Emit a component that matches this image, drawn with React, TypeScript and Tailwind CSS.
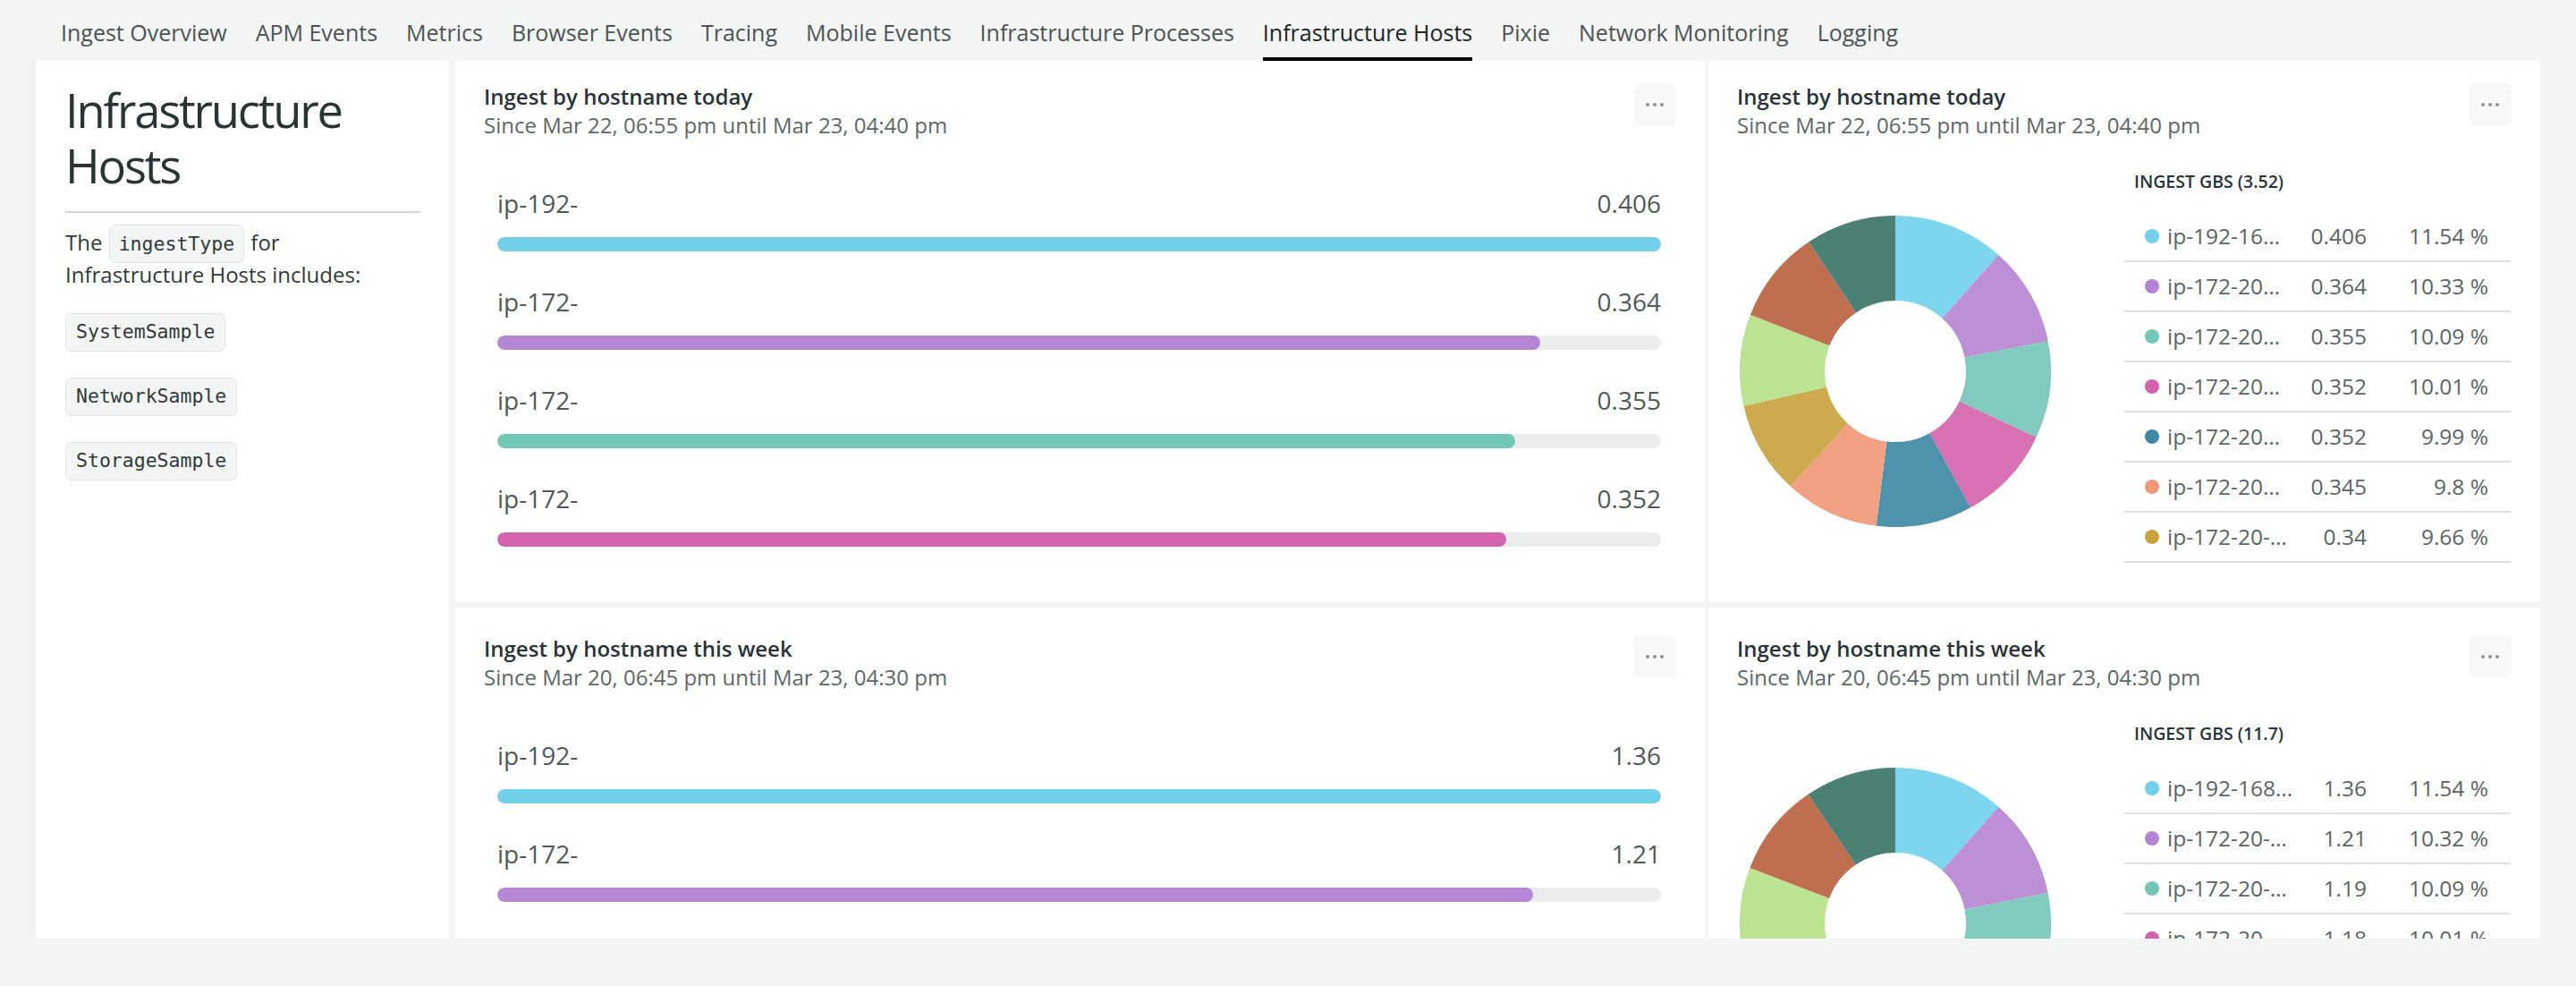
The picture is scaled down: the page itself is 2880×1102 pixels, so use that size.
import React from 'react';

const tabs = [
  'Ingest Overview',
  'APM Events',
  'Metrics',
  'Browser Events',
  'Tracing',
  'Mobile Events',
  'Infrastructure Processes',
  'Infrastructure Hosts',
  'Pixie',
  'Network Monitoring',
  'Logging',
];

type BarRow = { label: string; value: number; color: string };
type LegendRow = { name: string; value: string; pct: string; dot: string };

const sliceColors = ['#7dd6ee', '#bd90d6', '#80cbbd', '#d771b4', '#4f92ab', '#f2a084', '#cda94f', '#bce391', '#bf6f50', '#4b8175'];
const dotColors = ['#71cfea', '#b583d3', '#72c6b5', '#d461ad', '#3d88a4', '#f29679', '#c9a13e'];

const todayBars: BarRow[] = [
  { label: 'ip-192-', value: 0.406, color: '#71cfea' },
  { label: 'ip-172-', value: 0.364, color: '#b685d4' },
  { label: 'ip-172-', value: 0.355, color: '#73c7b7' },
  { label: 'ip-172-', value: 0.352, color: '#d462ae' },
];

const weekBars: BarRow[] = [
  { label: 'ip-192-', value: 1.36, color: '#71cfea' },
  { label: 'ip-172-', value: 1.21, color: '#b685d4' },
  { label: 'ip-172-', value: 1.19, color: '#73c7b7' },
  { label: 'ip-172-', value: 1.18, color: '#d462ae' },
];

const todayLegend: LegendRow[] = [
  { name: 'ip-192-16…', value: '0.406', pct: '11.54 %', dot: dotColors[0] },
  { name: 'ip-172-20…', value: '0.364', pct: '10.33 %', dot: dotColors[1] },
  { name: 'ip-172-20…', value: '0.355', pct: '10.09 %', dot: dotColors[2] },
  { name: 'ip-172-20…', value: '0.352', pct: '10.01 %', dot: dotColors[3] },
  { name: 'ip-172-20…', value: '0.352', pct: '9.99 %', dot: dotColors[4] },
  { name: 'ip-172-20…', value: '0.345', pct: '9.8 %', dot: dotColors[5] },
  { name: 'ip-172-20-…', value: '0.34', pct: '9.66 %', dot: dotColors[6] },
];

const weekLegend: LegendRow[] = [
  { name: 'ip-192-168…', value: '1.36', pct: '11.54 %', dot: dotColors[0] },
  { name: 'ip-172-20-…', value: '1.21', pct: '10.32 %', dot: dotColors[1] },
  { name: 'ip-172-20-…', value: '1.19', pct: '10.09 %', dot: dotColors[2] },
  { name: 'ip-172-20-…', value: '1.18', pct: '10.01 %', dot: dotColors[3] },
  { name: 'ip-172-20-…', value: '1.17', pct: '9.93 %', dot: dotColors[4] },
  { name: 'ip-172-20-…', value: '1.15', pct: '9.76 %', dot: dotColors[5] },
  { name: 'ip-172-20-…', value: '1.13', pct: '9.59 %', dot: dotColors[6] },
];

const todaySlices = [0.406, 0.364, 0.355, 0.352, 0.352, 0.345, 0.34, 0.334, 0.341, 0.331];
const weekSlices = [11.54, 10.32, 10.09, 10.01, 9.93, 9.76, 9.59, 9.55, 9.75, 9.46];

const Donut: React.FC<{ values: number[] }> = ({ values }) => {
  const total = values.reduce((s, v) => s + v, 0);
  const R = 174;
  const r = 79;
  const c = 174;
  const pt = (rad: number, a: number) => [c + rad * Math.sin(a), c - rad * Math.cos(a)];
  let acc = 0;
  return (
    <svg width="348" height="348" viewBox="0 0 348 348" className="shrink-0">
      {values.map((v, i) => {
        const a0 = (acc / total) * Math.PI * 2;
        acc += v;
        const a1 = (acc / total) * Math.PI * 2;
        const large = a1 - a0 > Math.PI ? 1 : 0;
        const [x0, y0] = pt(R, a0);
        const [x1, y1] = pt(R, a1);
        const [x2, y2] = pt(r, a1);
        const [x3, y3] = pt(r, a0);
        const d = `M${x0} ${y0}A${R} ${R} 0 ${large} 1 ${x1} ${y1}L${x2} ${y2}A${r} ${r} 0 ${large} 0 ${x3} ${y3}Z`;
        return <path key={i} d={d} fill={sliceColors[i % sliceColors.length]} />;
      })}
    </svg>
  );
};

const MenuButton = () => (
  <button className="mt-[1px] w-[48px] h-[48px] rounded-[8px] bg-[#f7f8f8] flex items-center justify-center gap-[4px] shrink-0">
    <span className="w-[4px] h-[4px] rounded-full bg-[#8f9696]" />
    <span className="w-[4px] h-[4px] rounded-full bg-[#8f9696]" />
    <span className="w-[4px] h-[4px] rounded-full bg-[#8f9696]" />
  </button>
);

const CardHeader: React.FC<{ title: string; since: string }> = ({ title, since }) => (
  <div className="flex items-start justify-between">
    <div>
      <h3 className="text-[24px] leading-[32px] font-semibold text-[#293338]">{title}</h3>
      <p className="text-[24px] leading-[32px] text-[#5d6767]">{since}</p>
    </div>
    <MenuButton />
  </div>
);

const BarCard: React.FC<{ title: string; since: string; rows: BarRow[] }> = ({ title, since, rows }) => {
  const max = Math.max(...rows.map((r) => r.value));
  return (
    <div className="bg-white rounded-[4px] pt-[30px] px-[32px] overflow-hidden">
      <CardHeader title={title} since={since} />
      <div className="mt-[52px] pl-[15px] pr-[17px] flex flex-col gap-[37px]">
        {rows.map((row, i) => (
          <div key={i}>
            <div className="flex justify-between text-[28px] leading-[38px] text-[#505959]">
              <span>{row.label}</span>
              <span>{row.value}</span>
            </div>
            <div className="mt-[19px] h-[16px] rounded-full bg-[#ebeded] overflow-hidden">
              <div className="h-full rounded-full" style={{ width: `${(row.value / max) * 100}%`, backgroundColor: row.color }} />
            </div>
          </div>
        ))}
      </div>
    </div>
  );
};

const PieCard: React.FC<{ title: string; since: string; total: string; slices: number[]; legend: LegendRow[] }> = ({
  title,
  since,
  total,
  slices,
  legend,
}) => (
  <div className="bg-white rounded-[4px] pt-[30px] px-[32px] overflow-hidden">
    <CardHeader title={title} since={since} />
    <div className="mt-[33px] flex items-start justify-between">
      <div className="mt-[52px] ml-[3px]">
        <Donut values={slices} />
      </div>
      <div className="w-[432px] mr-[1px]">
        <div className="pl-[11px] h-[28px] text-[19.5px] leading-[28px] font-semibold uppercase text-[#293338]">
          Ingest GBs ({total})
        </div>
        <div className="mt-[20px]">
          {legend.map((row, i) => (
            <div key={i} className="h-[56px] flex items-center border-b-2 border-[#dfe1e1] text-[24.5px] text-[#5b6464] whitespace-nowrap">
              <span className="ml-[23px] w-[16px] h-[16px] rounded-full shrink-0" style={{ backgroundColor: row.dot }} />
              <span className="ml-[9px] w-[138px]">{row.name}</span>
              <span className="w-[85px] text-right">{row.value}</span>
              <span className="w-[136px] text-right">{row.pct}</span>
            </div>
          ))}
        </div>
      </div>
    </div>
  </div>
);

const Code: React.FC<{ children: React.ReactNode }> = ({ children }) => (
  <code className="font-['DejaVu_Sans_Mono',monospace] text-[21.5px] px-[10px] py-[8px] mx-[1px] rounded-[7px] bg-[#f3f4f4] border border-[#e1e4e4]">
    {children}
  </code>
);

const Pill: React.FC<{ children: React.ReactNode }> = ({ children }) => (
  <div className="h-[43px] px-[11px] flex items-center rounded-[7px] bg-[#f3f4f4] border border-[#e1e4e4] font-['DejaVu_Sans_Mono',monospace] text-[21.5px] text-[#2f3a3a]">
    {children}
  </div>
);

export default function App() {
  return (
    <div className="w-[2880px] h-[1102px] bg-[#f3f4f4] overflow-hidden font-['Open_Sans','Liberation_Sans',sans-serif]">
      <nav className="h-[68px] pl-[68px] flex items-end gap-[32px]">
        {tabs.map((t) => {
          const active = t === 'Infrastructure Hosts';
          return (
            <div
              key={t}
              className={`pb-[11px] border-b-4 text-[25px] leading-[34px] whitespace-nowrap ${
                active ? 'border-black text-[#1d2525]' : 'border-transparent text-[#4b5454]'
              }`}
            >
              {t}
            </div>
          );
        })}
      </nav>

      <div className="pl-[32px] w-[2848px] h-[981px] overflow-hidden">
        <div className="h-full pl-[8px] bg-[#eef0f0]">
          <div className="-mt-[6px] flex gap-[7px] items-stretch bg-[#f3f4f4]">
            <aside className="w-[462px] shrink-0 bg-white rounded-[4px] pt-[30px] pl-[33px] pr-[32px]">
              <h1 className="text-[52.5px] leading-[62px] tracking-[-2.2px] text-[#293535]">Infrastructure Hosts</h1>
              <div className="mt-[20px] h-[2px] bg-[#d3d6d6]" />
              <p className="mt-[16px] text-[24px] leading-[34px] text-[#2f3a3a]">
                The <Code>ingestType</Code> for Infrastructure Hosts includes:
              </p>
              <div className="mt-[26px] flex flex-col items-start gap-[29px]">
                <Pill>SystemSample</Pill>
                <Pill>NetworkSample</Pill>
                <Pill>StorageSample</Pill>
              </div>
            </aside>

            <div className="grid grid-cols-[1397px_930px] grid-rows-[611px_611px] gap-x-[4px] gap-y-[6px]">
              <BarCard title="Ingest by hostname today" since="Since Mar 22, 06:55 pm until Mar 23, 04:40 pm" rows={todayBars} />
              <PieCard
                title="Ingest by hostname today"
                since="Since Mar 22, 06:55 pm until Mar 23, 04:40 pm"
                total="3.52"
                slices={todaySlices}
                legend={todayLegend}
              />
              <BarCard title="Ingest by hostname this week" since="Since Mar 20, 06:45 pm until Mar 23, 04:30 pm" rows={weekBars} />
              <PieCard
                title="Ingest by hostname this week"
                since="Since Mar 20, 06:45 pm until Mar 23, 04:30 pm"
                total="11.7"
                slices={weekSlices}
                legend={weekLegend}
              />
            </div>
          </div>
        </div>
      </div>
    </div>
  );
}
